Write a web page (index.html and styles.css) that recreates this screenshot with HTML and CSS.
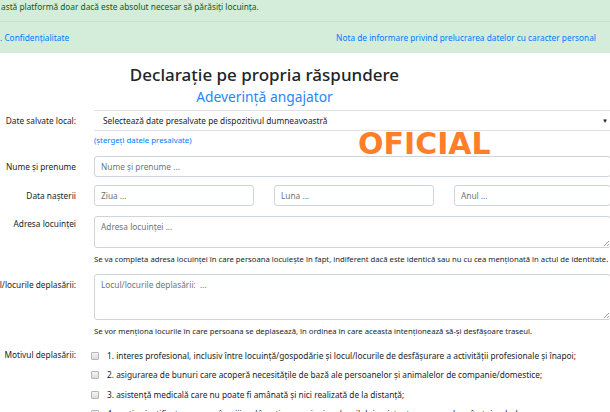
FILE: index.html
```html
<!DOCTYPE html>
<html lang="ro">
<head>
<meta charset="utf-8">
<title>Declarație pe propria răspundere</title>
<link rel="stylesheet" href="styles.css">
</head>
<body>
<div class="notice">
  <div class="notice-msg">astă platformă doar dacă este absolut necesar să părăsiți locuința.</div>
  <div class="notice-links">
    <a class="lnk">. Confidențialitate</a>
    <a class="lnk">Nota de informare privind prelucrarea datelor cu caracter personal</a>
  </div>
</div>

<div class="titles">
  <h1 class="title">Declarație pe propria răspundere</h1>
  <h2 class="subtitle">Adeverință angajator</h2>
</div>

<div class="stamp">OFICIAL</div>

<form class="form">
  <div class="row row-select">
    <div class="label">Date salvate local:</div>
    <div class="ctrl">
      <div class="select"><span>Selectează date presalvate pe dispozitivul dumneavoastră</span><span class="arrow">▼</span></div>
      <a class="lnk small-link">(ștergeți datele presalvate)</a>
    </div>
  </div>

  <div class="row row-name">
    <div class="label">Nume și prenume</div>
    <div class="ctrl"><div class="input">Nume și prenume ...</div></div>
  </div>

  <div class="row row-date">
    <div class="label">Data nașterii</div>
    <div class="ctrl trio">
      <div class="input">Ziua ...</div>
      <div class="input">Luna ...</div>
      <div class="input">Anul ...</div>
    </div>
  </div>

  <div class="row row-addr">
    <div class="label label-top1">Adresa locuinței</div>
    <div class="ctrl">
      <div class="textarea ta-addr">Adresa locuinței ...<span class="grip"></span></div>
      <div class="help">Se va completa adresa locuinței în care persoana locuiește în fapt, indiferent dacă este identică sau nu cu cea menționată în actul de identitate.</div>
    </div>
  </div>

  <div class="row row-loc">
    <div class="label label-top2">Locul/locurile deplasării:</div>
    <div class="ctrl">
      <div class="textarea ta-loc">Locul/locurile deplasării:&nbsp; ...<span class="grip"></span></div>
      <div class="help">Se vor menționa locurile în care persoana se deplasează, în ordinea în care aceasta intenționează să-și desfășoare traseul.</div>
    </div>
  </div>

  <div class="row row-motiv">
    <div class="label label-top3">Motivul deplasării:</div>
    <div class="ctrl checks">
      <div class="check"><span class="box"></span>1. interes profesional, inclusiv între locuință/gospodărie și locul/locurile de desfășurare a activității profesionale și înapoi;</div>
      <div class="check"><span class="box"></span>2. asigurarea de bunuri care acoperă necesitățile de bază ale persoanelor și animalelor de companie/domestice;</div>
      <div class="check"><span class="box"></span>3. asistență medicală care nu poate fi amânată și nici realizată de la distanță;</div>
      <div class="check"><span class="box"></span>4. motive justificate, precum îngrijirea/ însoțirea unui minor/copilului, asistența persoanelor vârstnice, bolnave sau cu</div>
    </div>
  </div>
</form>
</body>
</html>
```

FILE: styles.css
```css
html, body {
  margin: 0;
  padding: 0;
}
body {
  width: 610px;
  height: 412px;
  overflow: hidden;
  position: relative;
  font-family: "Noto Sans", "Open Sans", sans-serif;
  font-size: 8.3px;
  color: #212529;
  background: #fff;
}
.notice {
  background: #d4edda;
  color: #155724;
}
.notice-msg {
  height: 21px;
  line-height: 13px;
  padding-left: 1px;
  border-bottom: 1px solid #c3e6cb;
  white-space: nowrap;
}
.notice-links {
  height: 31px;
  display: flex;
  justify-content: space-between;
  align-items: center;
  padding: 0 14px 0 0;
}
.lnk {
  color: #007bff;
  text-decoration: none;
}
.titles {
  width: 529px;
  text-align: center;
  padding-top: 12px;
}
.title {
  margin: 0;
  font-size: 17px;
  line-height: 20px;
  font-weight: 500;
  color: #212529;
}
.subtitle {
  margin: 1px 0 0;
  font-size: 13.8px;
  line-height: 22px;
  font-weight: 400;
  color: #2a85f5;
}
.stamp {
  position: absolute;
  left: 358px;
  top: 128px;
  font-family: "DejaVu Sans", sans-serif;
  font-weight: bold;
  font-size: 30px;
  line-height: 32px;
  color: #ff7e2a;
}
.form {
  width: 611px;
  margin-top: 2px;
}
.row {
  display: grid;
  grid-template-columns: 76px 517px;
  column-gap: 18px;
}
.label {
  display: flex;
  justify-content: flex-end;
  align-items: center;
  white-space: nowrap;
  height: 21px;
  line-height: 12px;
  color: #212529;
}
.label-top1 {
  height: auto;
  align-items: flex-start;
  padding-top: 2px;
}
.label-top2 {
  height: auto;
  align-items: flex-start;
  padding-top: 5px;
}
.label-top3 {
  height: auto;
  align-items: flex-start;
  padding-top: 3px;
}
.ctrl {
  min-width: 0;
}
.select {
  height: 19px;
  border-top: 1px solid #dfe2e6;
  border-bottom: 1px solid #dfe2e6;
  display: flex;
  align-items: center;
  justify-content: space-between;
  padding: 0 3px 0 9px;
  white-space: nowrap;
  color: #212529;
}
.arrow {
  font-size: 6px;
  color: #222;
}
.small-link {
  display: block;
  margin-top: 3px;
  line-height: 12px;
  font-size: 7.8px;
}
.row-name {
  margin-top: 10px;
}
.input {
  height: 19px;
  border: 1px solid #ced4da;
  border-radius: 3px;
  display: flex;
  align-items: center;
  padding: 0 6px;
  color: #6c757d;
  white-space: nowrap;
}
.row-date {
  margin-top: 8px;
}
.trio {
  display: grid;
  grid-template-columns: 160px 160px 157px;
  column-gap: 20px;
}
.row-addr {
  margin-top: 10px;
}
.textarea {
  position: relative;
  border: 1px solid #ced4da;
  border-radius: 3px;
  padding: 4px 6px;
  color: #6c757d;
  line-height: 12px;
  box-sizing: border-box;
}
.ta-addr {
  height: 32px;
}
.ta-loc {
  height: 46px;
}
.grip {
  position: absolute;
  right: 1px;
  bottom: 1px;
  width: 5px;
  height: 5px;
  background: linear-gradient(135deg, transparent 45%, #999 45%, #999 55%, transparent 55%, transparent 75%, #999 75%, #999 85%, transparent 85%);
}
.help {
  margin-top: 5px;
  line-height: 12px;
  font-size: 7.7px;
  white-space: nowrap;
  color: #212529;
}
.row-loc {
  margin-top: 9px;
}
.row-motiv {
  margin-top: 9px;
}
.checks {
  display: flex;
  flex-direction: column;
  margin-left: -3px;
}
.check {
  display: flex;
  align-items: center;
  height: 19.5px;
  line-height: 12px;
  white-space: nowrap;
  color: #212529;
}
.box {
  width: 6px;
  height: 6px;
  border: 1px solid #b5b5b5;
  border-radius: 1px;
  background: linear-gradient(#f4f4f4, #dcdcdc);
  margin-right: 8px;
  flex: none;
}
```
